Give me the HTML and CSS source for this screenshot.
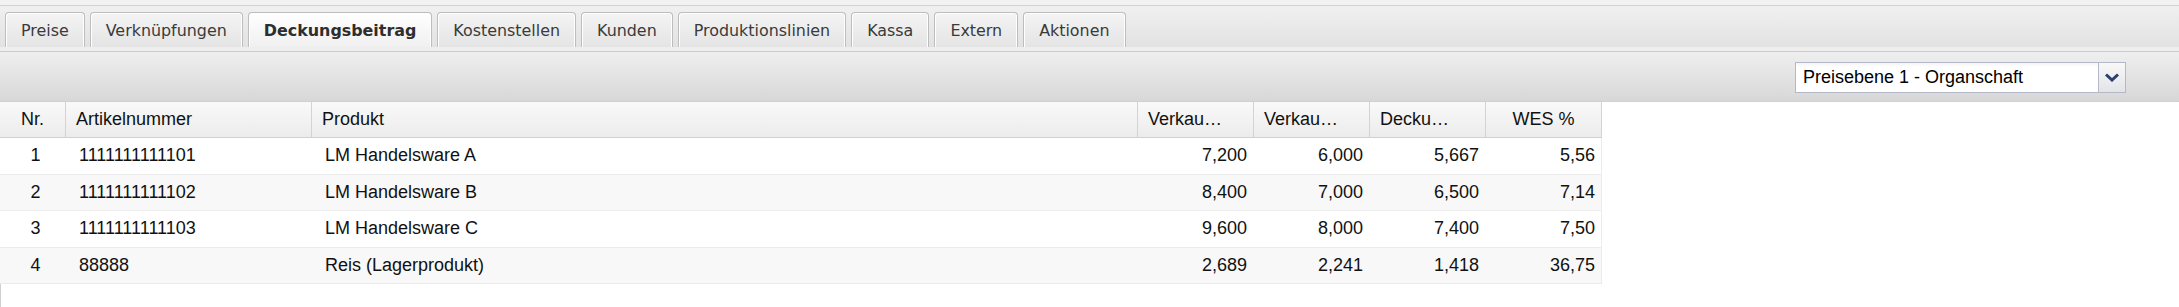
FILE: index.html
```html
<!DOCTYPE html>
<html lang="de">
<head>
<meta charset="utf-8">
<title>Deckungsbeitrag</title>
<link rel="stylesheet" href="styles.css">
</head>
<body>
<div class="top-strip"></div>
<div class="tabbar">
  <div class="tab">Preise</div>
  <div class="tab">Verknüpfungen</div>
  <div class="tab active">Deckungsbeitrag</div>
  <div class="tab">Kostenstellen</div>
  <div class="tab">Kunden</div>
  <div class="tab">Produktionslinien</div>
  <div class="tab">Kassa</div>
  <div class="tab">Extern</div>
  <div class="tab">Aktionen</div>
</div>
<div class="tabstrip"></div>
<div class="toolbar">
  <div class="combo">
    <div class="combo-text">Preisebene 1 - Organschaft</div>
    <div class="combo-trigger">
      <svg width="14" height="9" viewBox="0 0 14 9"><path d="M1 1.5 L7 7 L13 1.5" fill="none" stroke="#2c3e70" stroke-width="3"/></svg>
    </div>
  </div>
</div>
<div class="grid-area">
  <div class="grid">
    <div class="hrow">
      <div class="hc center">Nr.</div>
      <div class="hc">Artikelnummer</div>
      <div class="hc">Produkt</div>
      <div class="hc">Verkau…</div>
      <div class="hc">Verkau…</div>
      <div class="hc">Decku…</div>
      <div class="hc center">WES %</div>
    </div>
    <div class="row">
      <div class="c center">1</div><div class="c">1111111111101</div><div class="c">LM Handelsware A</div>
      <div class="c num">7,200</div><div class="c num">6,000</div><div class="c num">5,667</div><div class="c num">5,56</div>
    </div>
    <div class="row alt">
      <div class="c center">2</div><div class="c">1111111111102</div><div class="c">LM Handelsware B</div>
      <div class="c num">8,400</div><div class="c num">7,000</div><div class="c num">6,500</div><div class="c num">7,14</div>
    </div>
    <div class="row">
      <div class="c center">3</div><div class="c">1111111111103</div><div class="c">LM Handelsware C</div>
      <div class="c num">9,600</div><div class="c num">8,000</div><div class="c num">7,400</div><div class="c num">7,50</div>
    </div>
    <div class="row alt">
      <div class="c center">4</div><div class="c">88888</div><div class="c">Reis (Lagerprodukt)</div>
      <div class="c num">2,689</div><div class="c num">2,241</div><div class="c num">1,418</div><div class="c num">36,75</div>
    </div>
  </div>
</div>
</body>
</html>
```

FILE: styles.css
```css
html, body {
  margin: 0;
  padding: 0;
  background: #ffffff;
}
body {
  width: 2179px;
  height: 307px;
  overflow: hidden;
  font-family: "Liberation Sans", Arial, sans-serif;
}
.top-strip {
  height: 5px;
  background: #f2f2f2;
  border-bottom: 1px solid #d2d2d2;
}
.tabbar {
  height: 41px;
  box-sizing: border-box;
  padding: 6px 0 0 5px;
  display: flex;
  align-items: flex-end;
  gap: 5px;
  background: linear-gradient(#f0f0f0, #e2e2e2);
}
.tab {
  height: 35px;
  box-sizing: border-box;
  padding: 0 15px;
  display: flex;
  align-items: center;
  font-family: "DejaVu Sans", Verdana, sans-serif;
  font-size: 15.9px;
  color: #3a3a3a;
  border: 1px solid #bdbdbd;
  border-bottom: none;
  border-radius: 4px 4px 0 0;
  box-shadow: inset 1px 1px 0 #ffffff, inset -1px 0 0 #ffffff;
  background: linear-gradient(#f4f4f4, #e4e4e4);
}
.tab.active {
  font-weight: bold;
  color: #2e2e2e;
  background: linear-gradient(#ffffff, #f0f0f0);
}
.tabstrip {
  height: 4px;
  background: #eeeeee;
  border-bottom: 1px solid #cbcbcb;
}
.toolbar {
  height: 50px;
  box-sizing: border-box;
  display: flex;
  align-items: center;
  justify-content: flex-end;
  padding-right: 53px;
  background: linear-gradient(#efefef, #d7d7d7);
  border-bottom: 1px solid #d0d0d0;
}
.combo {
  display: flex;
  height: 31px;
  margin-top: 2px;
}
.combo-text {
  width: 303px;
  box-sizing: border-box;
  border: 1px solid #b5b8c8;
  border-right: none;
  background: linear-gradient(#f4f4f4, #ffffff 4px);
  padding-left: 7px;
  display: flex;
  align-items: center;
  font-size: 18px;
  color: #000;
}
.combo-trigger {
  width: 28px;
  box-sizing: border-box;
  border: 1px solid #b5b8c8;
  background: linear-gradient(#f8f8f8, #e3e4e8);
  display: flex;
  align-items: center;
  justify-content: center;
}
.grid-area {
  border-left: 1px solid #d0d0d0;
  height: 205px;
}
.grid {
  width: 1602px;
  margin-left: -1px;
}
.hrow, .row {
  display: grid;
  grid-template-columns: 66px 246px 826px repeat(4, 116px);
}
.hrow {
  height: 35px;
  background: linear-gradient(#f9f9f9, #ececec);
  border-bottom: 1px solid #d0d0d0;
}
.hc {
  display: flex;
  align-items: center;
  padding-left: 10px;
  border-right: 1px solid #d3d3d3;
  font-size: 18px;
  color: #111;
  white-space: nowrap;
  overflow: hidden;
}
.hc.center {
  justify-content: center;
  padding-left: 0;
}
.row {
  height: 36.6px;
  box-sizing: border-box;
  border-bottom: 1px solid #ececec;
  border-right: 1px solid #ececec;
  background: #ffffff;
}
.row.alt {
  background: #f8f8f8;
}
.c {
  display: flex;
  align-items: center;
  padding-left: 13px;
  font-size: 18px;
  color: #111;
  white-space: nowrap;
}
.c.center {
  justify-content: center;
  padding-left: 5px;
}
.c.num {
  justify-content: flex-end;
  padding-left: 0;
  padding-right: 7px;
}
```
